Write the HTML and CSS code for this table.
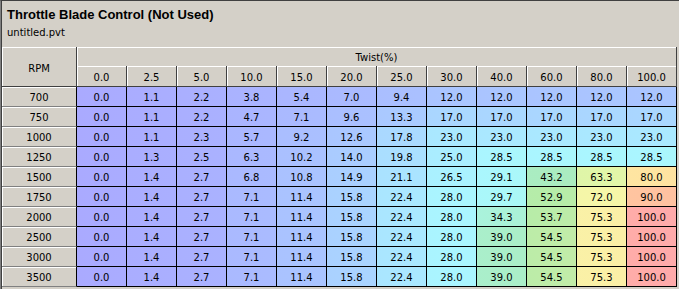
FILE: index.html
```html
<!DOCTYPE html>
<html>
<head>
<meta charset="utf-8">
<title>Throttle Blade Control</title>
<link rel="stylesheet" href="styles.css">
</head>
<body>
<div class="window">
  <div class="caption">
    <div class="title">Throttle Blade Control (Not Used)</div>
    <div class="file">untitled.pvt</div>
  </div>
  <div class="grid">
    <div class="hd corner">RPM</div>
    <div class="hd axis">Twist(%)</div>
    <div class="hd col">0.0</div><div class="hd col">2.5</div><div class="hd col">5.0</div><div class="hd col">10.0</div><div class="hd col">15.0</div><div class="hd col">20.0</div><div class="hd col">25.0</div><div class="hd col">30.0</div><div class="hd col">40.0</div><div class="hd col">60.0</div><div class="hd col">80.0</div><div class="hd col">100.0</div>

    <div class="hd row">700</div>
    <div class="cell" style="--v:0">0.0</div><div class="cell" style="--v:1.1">1.1</div><div class="cell" style="--v:2.2">2.2</div><div class="cell" style="--v:3.8">3.8</div><div class="cell" style="--v:5.4">5.4</div><div class="cell" style="--v:7">7.0</div><div class="cell" style="--v:9.4">9.4</div><div class="cell" style="--v:12">12.0</div><div class="cell" style="--v:12">12.0</div><div class="cell" style="--v:12">12.0</div><div class="cell" style="--v:12">12.0</div><div class="cell" style="--v:12">12.0</div>

    <div class="hd row">750</div>
    <div class="cell" style="--v:0">0.0</div><div class="cell" style="--v:1.1">1.1</div><div class="cell" style="--v:2.2">2.2</div><div class="cell" style="--v:4.7">4.7</div><div class="cell" style="--v:7.1">7.1</div><div class="cell" style="--v:9.6">9.6</div><div class="cell" style="--v:13.3">13.3</div><div class="cell" style="--v:17">17.0</div><div class="cell" style="--v:17">17.0</div><div class="cell" style="--v:17">17.0</div><div class="cell" style="--v:17">17.0</div><div class="cell" style="--v:17">17.0</div>

    <div class="hd row">1000</div>
    <div class="cell" style="--v:0">0.0</div><div class="cell" style="--v:1.1">1.1</div><div class="cell" style="--v:2.3">2.3</div><div class="cell" style="--v:5.7">5.7</div><div class="cell" style="--v:9.2">9.2</div><div class="cell" style="--v:12.6">12.6</div><div class="cell" style="--v:17.8">17.8</div><div class="cell" style="--v:23">23.0</div><div class="cell" style="--v:23">23.0</div><div class="cell" style="--v:23">23.0</div><div class="cell" style="--v:23">23.0</div><div class="cell" style="--v:23">23.0</div>

    <div class="hd row">1250</div>
    <div class="cell" style="--v:0">0.0</div><div class="cell" style="--v:1.3">1.3</div><div class="cell" style="--v:2.5">2.5</div><div class="cell" style="--v:6.3">6.3</div><div class="cell" style="--v:10.2">10.2</div><div class="cell" style="--v:14">14.0</div><div class="cell" style="--v:19.8">19.8</div><div class="cell" style="--v:25">25.0</div><div class="cell" style="--v:28.5">28.5</div><div class="cell" style="--v:28.5">28.5</div><div class="cell" style="--v:28.5">28.5</div><div class="cell" style="--v:28.5">28.5</div>

    <div class="hd row">1500</div>
    <div class="cell" style="--v:0">0.0</div><div class="cell" style="--v:1.4">1.4</div><div class="cell" style="--v:2.7">2.7</div><div class="cell" style="--v:6.8">6.8</div><div class="cell" style="--v:10.8">10.8</div><div class="cell" style="--v:14.9">14.9</div><div class="cell" style="--v:21.1">21.1</div><div class="cell" style="--v:26.5">26.5</div><div class="cell" style="--v:29.1">29.1</div><div class="cell" style="--v:43.2">43.2</div><div class="cell" style="--v:63.3">63.3</div><div class="cell" style="--v:80">80.0</div>

    <div class="hd row">1750</div>
    <div class="cell" style="--v:0">0.0</div><div class="cell" style="--v:1.4">1.4</div><div class="cell" style="--v:2.7">2.7</div><div class="cell" style="--v:7.1">7.1</div><div class="cell" style="--v:11.4">11.4</div><div class="cell" style="--v:15.8">15.8</div><div class="cell" style="--v:22.4">22.4</div><div class="cell" style="--v:28">28.0</div><div class="cell" style="--v:29.7">29.7</div><div class="cell" style="--v:52.9">52.9</div><div class="cell" style="--v:72">72.0</div><div class="cell" style="--v:90">90.0</div>

    <div class="hd row">2000</div>
    <div class="cell" style="--v:0">0.0</div><div class="cell" style="--v:1.4">1.4</div><div class="cell" style="--v:2.7">2.7</div><div class="cell" style="--v:7.1">7.1</div><div class="cell" style="--v:11.4">11.4</div><div class="cell" style="--v:15.8">15.8</div><div class="cell" style="--v:22.4">22.4</div><div class="cell" style="--v:28">28.0</div><div class="cell" style="--v:34.3">34.3</div><div class="cell" style="--v:53.7">53.7</div><div class="cell" style="--v:75.3">75.3</div><div class="cell" style="--v:100">100.0</div>

    <div class="hd row">2500</div>
    <div class="cell" style="--v:0">0.0</div><div class="cell" style="--v:1.4">1.4</div><div class="cell" style="--v:2.7">2.7</div><div class="cell" style="--v:7.1">7.1</div><div class="cell" style="--v:11.4">11.4</div><div class="cell" style="--v:15.8">15.8</div><div class="cell" style="--v:22.4">22.4</div><div class="cell" style="--v:28">28.0</div><div class="cell" style="--v:39">39.0</div><div class="cell" style="--v:54.5">54.5</div><div class="cell" style="--v:75.3">75.3</div><div class="cell" style="--v:100">100.0</div>

    <div class="hd row">3000</div>
    <div class="cell" style="--v:0">0.0</div><div class="cell" style="--v:1.4">1.4</div><div class="cell" style="--v:2.7">2.7</div><div class="cell" style="--v:7.1">7.1</div><div class="cell" style="--v:11.4">11.4</div><div class="cell" style="--v:15.8">15.8</div><div class="cell" style="--v:22.4">22.4</div><div class="cell" style="--v:28">28.0</div><div class="cell" style="--v:39">39.0</div><div class="cell" style="--v:54.5">54.5</div><div class="cell" style="--v:75.3">75.3</div><div class="cell" style="--v:100">100.0</div>

    <div class="hd row">3500</div>
    <div class="cell" style="--v:0">0.0</div><div class="cell" style="--v:1.4">1.4</div><div class="cell" style="--v:2.7">2.7</div><div class="cell" style="--v:7.1">7.1</div><div class="cell" style="--v:11.4">11.4</div><div class="cell" style="--v:15.8">15.8</div><div class="cell" style="--v:22.4">22.4</div><div class="cell" style="--v:28">28.0</div><div class="cell" style="--v:39">39.0</div><div class="cell" style="--v:54.5">54.5</div><div class="cell" style="--v:75.3">75.3</div><div class="cell" style="--v:100">100.0</div>
  </div>
</div>
</body>
</html>
```
FILE: styles.css
```css
html, body {
  margin: 0;
  padding: 0;
}

body {
  background: #d4d0c8;
  color: #000;
  font: 10px/12px "DejaVu Sans", sans-serif;
}

.window {
  height: 289px;
  box-sizing: border-box;
  border-top: 1px solid #404040;
  border-left: 1px solid #808080;
  box-shadow: inset 1px 0 0 #404040;
  overflow: hidden;
}

.caption {
  height: 46px;
  box-sizing: border-box;
  padding: 6px 0 0 6px;
}

.title {
  font: bold 13px/16px "Liberation Sans", sans-serif;
}

.file {
  margin-top: 4px;
  line-height: 12px;
}

.grid {
  display: grid;
  grid-template-columns: 75px repeat(12, 50px);
  grid-template-rows: 19px 21px;
  grid-auto-rows: 20px;
  margin-left: 1px;
  width: 675px;
}

.grid > div {
  box-sizing: border-box;
  text-align: center;
  line-height: 16px;
  padding-top: 3px;
  white-space: nowrap;
}

.hd {
  background: #d4d0c8;
  box-shadow: inset 1px 1px 0 #fff;
}

.corner {
  grid-row: span 2;
  padding-top: 14px !important;
  border-right: 1px solid #404040;
  border-bottom: 1px solid #404040;
}

.axis {
  grid-column: span 12;
  border-right: 1px solid #404040;
}

.col {
  padding-top: 4px !important;
  border-right: 1px solid #404040;
  border-bottom: 1px solid #404040;
}

.row {
  border-right: 1px solid #000;
  border-bottom: 1px solid #808080;
}

/* value -> colour: the cell shows the slice of the colour scale at var(--v) percent */
.cell {
  background-color: #aaaaff;
  background-image: linear-gradient(90deg,
    #aaaaff 0%,
    #aac4ff 12%,
    #aad6ff 17%,
    #aae8ff 23%,
    #aaf6ff 28.5%,
    #aaf8f8 30%,
    #aaf2d8 34.5%,
    #aaeec8 39.5%,
    #aaecc0 43.5%,
    #b6eca8 53%,
    #c2eca8 55%,
    #e2f6a8 63.5%,
    #f6f6a8 72%,
    #fbefa6 75.5%,
    #ffe2a0 80.5%,
    #ffc0a0 90.5%,
    #ffaaaa 100%);
  background-size: 10000% 100%;
  background-position: calc(var(--v) * 1%) 0;
  background-repeat: no-repeat;
  border-right: 1px solid #000;
  border-bottom: 1px solid #000;
}
```
